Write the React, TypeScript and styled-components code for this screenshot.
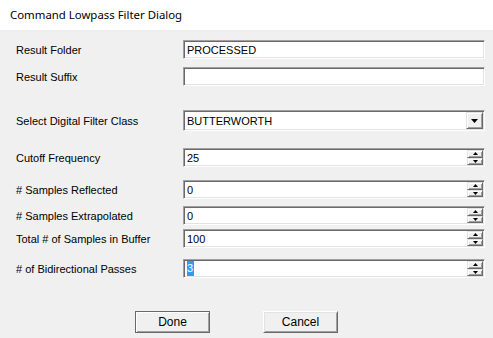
import * as React from 'react';
import styled, { createGlobalStyle } from 'styled-components';

const GlobalStyle = createGlobalStyle`
    html, body {
        margin: 0;
        padding: 0;
        background: #f0f0f0;
    }
    * {
        box-sizing: border-box;
    }
`;

const Window = styled.div`
    width: 493px;
    height: 338px;
    display: flex;
    flex-direction: column;
    background: #f0f0f0;
    font-family: 'Liberation Sans', Arial, sans-serif;
    font-size: 11px;
    color: #000000;
    overflow: hidden;
`;

const TitleBar = styled.div`
    height: 30px;
    flex: none;
    display: flex;
    align-items: center;
    padding-left: 10px;
    background: #ffffff;
    font-family: 'Noto Sans', 'Open Sans', sans-serif;
    font-size: 11.4px;
    padding-bottom: 1px;
`;

const Body = styled.div`
    flex: 1;
    display: flex;
    flex-direction: column;
    padding: 0 8px 0 16px;
`;

const Row = styled.div<{ $gap: number }>`
    display: grid;
    grid-template-columns: 167px 1fr;
    align-items: center;
    margin-top: ${(p) => p.$gap}px;
`;

const Label = styled.span`
    white-space: nowrap;
`;

const Field = styled.div<{ $height?: number }>`
    height: ${(p) => p.$height ?? 19}px;
    display: flex;
    align-items: stretch;
    background: #ffffff;
    border: 1px solid;
    border-color: #a0a0a0 #ffffff #ffffff #a0a0a0;
    box-shadow: inset 1px 1px #696969, inset -1px -1px #e3e3e3;
    padding: 1px;
`;

const FieldText = styled.div`
    flex: 1;
    display: flex;
    align-items: center;
    padding-left: 2px;
    white-space: nowrap;
`;

const Selected = styled.span`
    background: #3399ff;
    color: #ffffff;
    padding: 1px 1px 1px 0;
    line-height: 13px;
`;

const SpinColumn = styled.div`
    width: 16px;
    display: flex;
    flex-direction: column;
`;

const SpinButton = styled.div`
    flex: 1;
    display: flex;
    align-items: center;
    justify-content: center;
    background: #f0f0f0;
    border: 1px solid;
    border-color: #e3e3e3 #696969 #696969 #e3e3e3;
    box-shadow: inset 1px 1px #ffffff, inset -1px -1px #a0a0a0;
`;

const DropButton = styled(SpinButton)`
    flex: none;
    width: 17px;
`;

const ButtonBar = styled.div`
    display: flex;
    gap: 53px;
    padding-left: 119px;
    margin-top: 33px;
`;

const PushButton = styled.div<{ $default?: boolean }>`
    width: 75px;
    height: 22px;
    display: flex;
    align-items: center;
    justify-content: center;
    background: #f0f0f0;
    font-size: 12px;
    border: 1px solid;
    border-color: ${(p) => (p.$default ? '#696969' : '#ffffff #696969 #696969 #ffffff')};
    box-shadow: ${(p) =>
        p.$default
            ? 'inset 1px 1px #ffffff, inset -1px -1px #a0a0a0'
            : 'inset 1px 1px #e3e3e3, inset -1px -1px #a0a0a0'};
`;

const Arrow = ({ up, big }: { up?: boolean; big?: boolean }) => {
    const w = big ? 7 : 5;
    const h = big ? 4 : 3;
    const points = up ? `0,${h} ${w / 2},0 ${w},${h}` : `0,0 ${w},0 ${w / 2},${h}`;
    return (
        <svg width={w} height={h} viewBox={`0 0 ${w} ${h}`}>
            <polygon points={points} fill="#000000" />
        </svg>
    );
};

const Spinner = () => (
    <SpinColumn>
        <SpinButton>
            <Arrow up />
        </SpinButton>
        <SpinButton>
            <Arrow />
        </SpinButton>
    </SpinColumn>
);

interface SpinRowProps {
    gap: number;
    label: string;
    value: React.ReactNode;
}

const SpinRow: React.FC<SpinRowProps> = ({ gap, label, value }) => (
    <Row $gap={gap}>
        <Label>{label}</Label>
        <Field>
            <FieldText>{value}</FieldText>
            <Spinner />
        </Field>
    </Row>
);

export default function App() {
    return (
        <Window>
            <GlobalStyle />
            <TitleBar>Command Lowpass Filter Dialog</TitleBar>
            <Body>
                <Row $gap={10}>
                    <Label>Result Folder</Label>
                    <Field>
                        <FieldText>PROCESSED</FieldText>
                    </Field>
                </Row>
                <Row $gap={8}>
                    <Label>Result Suffix</Label>
                    <Field>
                        <FieldText />
                    </Field>
                </Row>
                <Row $gap={24}>
                    <Label>Select Digital Filter Class</Label>
                    <Field $height={21}>
                        <FieldText>BUTTERWORTH</FieldText>
                        <DropButton>
                            <Arrow big />
                        </DropButton>
                    </Field>
                </Row>
                <SpinRow gap={17} label="Cutoff Frequency" value="25" />
                <SpinRow gap={13} label="# Samples Reflected" value="0" />
                <SpinRow gap={7} label="# Samples Extrapolated" value="0" />
                <SpinRow gap={4} label="Total # of Samples in Buffer" value="100" />
                <SpinRow gap={11} label="# of Bidirectional Passes" value={<Selected>3</Selected>} />
                <ButtonBar>
                    <PushButton $default>Done</PushButton>
                    <PushButton>Cancel</PushButton>
                </ButtonBar>
            </Body>
        </Window>
    );
}
